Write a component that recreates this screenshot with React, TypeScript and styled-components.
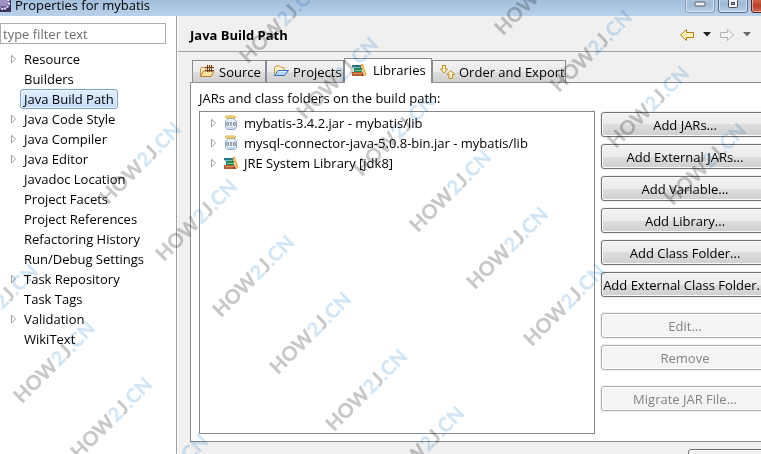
import React from 'react';
import styled, { createGlobalStyle, css } from 'styled-components';

const GlobalStyle = createGlobalStyle`
  * { box-sizing: border-box; }
  html, body { margin: 0; height: 100%; overflow: hidden; }
  #root { height: 100%; }
  body, button, input {
    font-family: "Open Sans", "Noto Sans", sans-serif;
    font-size: 13px;
    color: #000;
  }
`;

/* The dialog is wider than the viewport: its right edge runs out of view. */
const Dialog = styled.div`
  position: relative;
  display: flex;
  flex-direction: column;
  width: calc(100% + 24px);
  min-height: 100vh;
  background: #f0f0f0;
`;

const TitleBar = styled.header`
  display: flex;
  align-items: flex-end;
  height: 16px;
  overflow: hidden;
  background: linear-gradient(#a3bfdc, #b9d1ea);
`;

const TitleIcon = styled.svg`
  width: 16px;
  height: 16px;
  margin: 0 0 4px -5px;
`;

const TitleText = styled.h1`
  flex: 1;
  margin: 0;
  padding: 0 0 1px 4px;
  font-size: 13px;
  font-weight: 400;
  line-height: 20px;
`;

const WindowButtons = styled.div`
  display: flex;
  gap: 3px;
  padding: 0 4px 3px 0;
`;

const WindowButton = styled.button<{ $kind: 'plain' | 'strong' | 'close' }>`
  display: flex;
  align-items: center;
  justify-content: center;
  width: 30px;
  height: 18px;
  padding: 0;
  border: 1px solid ${(p) => (p.$kind === 'plain' ? '#879fba' : p.$kind === 'strong' ? '#586f8c' : '#5a2320')};
  border-radius: 0 0 3px 3px;
  box-shadow: inset 0 0 0 1px rgba(255, 255, 255, 0.5);
  background: ${(p) =>
    p.$kind === 'close'
      ? 'linear-gradient(#d87c66, #b9402a 60%, #d0674f)'
      : 'linear-gradient(#b5cce4, #9fbad6 50%, #b9cfe6)'};
`;

const Body = styled.div`
  flex: 1;
  display: flex;
`;

const Sidebar = styled.nav`
  flex: 0 0 178px;
  border-right: 1px solid #fafafa;
  box-shadow: inset -1px 0 #a0a0a0;
  background: #fff;
`;

const FilterInput = styled.input`
  display: block;
  width: 166px;
  height: 21px;
  margin: 7px 0 5px;
  padding: 0 2px;
  border: 1px solid #abadb3;
  border-radius: 0;
  background: #fff;
  outline: none;
  &::placeholder { color: #6d6d6d; opacity: 1; }
`;

const TreeList = styled.ul`
  margin: 0;
  padding: 0;
  list-style: none;
`;

const NavRow = styled.li`
  display: flex;
  align-items: center;
  height: 20px;
  padding-left: 10px;
`;

const ArrowSlot = styled.span`
  display: flex;
  flex: 0 0 10px;
`;

const NavItem = styled.button<{ $selected?: boolean }>`
  height: 20px;
  padding: 0 3px;
  border: 1px solid transparent;
  border-radius: 3px;
  background: none;
  line-height: 16px;
  white-space: nowrap;
  ${(p) =>
    p.$selected &&
    css`
      border-color: #7da2ce;
      background: linear-gradient(#e3effd, #c4dcfb);
      box-shadow: inset 0 0 0 1px #eef5fe;
    `}
`;

const Main = styled.main`
  flex: 1;
  display: flex;
  flex-direction: column;
  min-width: 0;
`;

const PageHeader = styled.div`
  display: flex;
  align-items: center;
  justify-content: space-between;
  height: 36px;
  padding: 2px 34px 0 12px;
  border-bottom: 1px solid #a0a0a0;
`;

const PageTitle = styled.h2`
  margin: 0;
  font-size: 13px;
  font-weight: 700;
  line-height: 20px;
`;

const History = styled.div`
  display: flex;
  align-items: center;
  gap: 8px;
`;

const IconButton = styled.button`
  display: flex;
  padding: 0;
  border: 0;
  background: none;
`;

const Folder = styled.section`
  flex: 1;
  display: flex;
  flex-direction: column;
  padding: 6px 8px 7px 12px;
`;

const TabStrip = styled.div`
  display: flex;
  align-items: flex-end;
  height: 24px;
  padding-left: 2px;
`;

const Tab = styled.button<{ $active?: boolean; $width: number }>`
  display: flex;
  align-items: center;
  gap: 4px;
  flex: 0 0 ${(p) => p.$width}px;
  height: 22px;
  padding: 0 0 0 6px;
  border: 1px solid #898c95;
  border-bottom: 0;
  background: linear-gradient(#f2f2f2, #ebebeb 50%, #dddddd 50%, #cfcfcf);
  white-space: nowrap;
  ${(p) =>
    p.$active &&
    css`
      z-index: 1;
      gap: 6px;
      height: 25px;
      margin-bottom: -1px;
      padding-bottom: 2px;
      background: #fff;
    `}
`;

const Panel = styled.div`
  flex: 1;
  display: flex;
  flex-direction: column;
  padding: 5px 7px 7px 8px;
  border: 1px solid #898c95;
  background: #fff;
`;

const PanelLabel = styled.p`
  margin: 0 0 3px;
  line-height: 20px;
`;

const PanelColumns = styled.div`
  flex: 1;
  display: flex;
  gap: 6px;
`;

const LibraryTree = styled.ul`
  flex: 1;
  min-width: 0;
  margin: 0;
  padding: 1px 0 0 10px;
  border: 1px solid #828790;
  list-style: none;
`;

const LibraryRow = styled.li`
  display: flex;
  align-items: center;
  height: 20px;
  white-space: nowrap;
`;

const LibraryIcon = styled.span`
  display: flex;
  margin: 0 5px 0 3px;
`;

const ActionColumn = styled.div`
  flex: 0 0 168px;
  display: flex;
  flex-direction: column;
  gap: 16px;
  padding-top: 1px;
`;

const ActionGroup = styled.div`
  display: flex;
  flex-direction: column;
  gap: 7px;
`;

const ActionButton = styled.button`
  height: 25px;
  padding: 0;
  border: 1px solid #707070;
  border-radius: 3px;
  background: linear-gradient(#f2f2f2, #ebebeb 50%, #dddddd 50%, #cfcfcf);
  box-shadow: inset 0 0 0 1px #fcfcfc, 0 0 0 1px #f0f0f0;
  line-height: 20px;
  white-space: nowrap;
  &:disabled {
    border-color: #adb2b5;
    background: #f4f4f4;
    color: #838383;
  }
`;

const Footer = styled.footer`
  display: flex;
  justify-content: flex-end;
  height: 5px;
  padding-right: 8px;
  overflow: hidden;
`;

const FooterButton = styled(ActionButton)`
  width: 89px;
`;

const WatermarkLayer = styled.div`
  position: absolute;
  inset: 0;
  z-index: 2;
  overflow: hidden;
  pointer-events: none;
  mix-blend-mode: multiply;
`;

const Watermark = styled.span<{ $x: number; $y: number }>`
  position: absolute;
  left: ${(p) => p.$x - 8}px;
  top: ${(p) => p.$y - 12}px;
  transform: rotate(-45deg);
  transform-origin: 8px 12px;
  color: #c8c8c8;
  font-family: Lato, sans-serif;
  font-size: 20px;
  font-weight: 900;
  line-height: 24px;
  white-space: nowrap;
`;

const Tint = styled.span`
  color: #d3e6f6;
`;

const Arrow = () => (
  <svg width="7" height="10" viewBox="0 0 7 10" aria-hidden="true">
    <path d="M1.5 1.2v7.6L5.5 5z" fill="#fff" stroke="#a0a0a0" />
  </svg>
);

const SourceIcon = () => (
  <svg width="16" height="16" viewBox="0 0 16 16" aria-hidden="true">
    <path d="M1.5 12V4.500l1-1h3l1 1.500h6V8" fill="#fff0c0" stroke="#c8924a" />
    <path d="M1.500 12.500 4.500 7h10.500l-3 5.500z" fill="#ffe3a0" stroke="#b87a2c" />
    <rect x="7" y="1" width="7" height="6" fill="#f3dcc0" />
    <path d="M6 3.500h9M6 6.500h9M8.500 1v7M10.500 1v7M12.500 1v7" stroke="#70402a" fill="none" />
  </svg>
);

const ProjectsIcon = () => (
  <svg width="16" height="16" viewBox="0 0 16 16" aria-hidden="true">
    <path d="M1.500 11V3.500L3 2h4l1.500 1.500h2.500v3.500" fill="#fff1bd" stroke="#c69a4a" />
    <path d="M1.500 11.500 5 6.500h10.500L11.500 11.500z" fill="#b4d6fa" stroke="#3a68b8" />
    <path d="M5.500 7.500h7.500" stroke="#e6f3ff" />
  </svg>
);

const BooksIcon = () => (
  <svg width="16" height="16" viewBox="0 0 16 16" aria-hidden="true">
    <path d="M1 3h9v3H3L1 5z" fill="#28788c" />
    <path d="M3 5.500h6" stroke="#7dc0c8" />
    <path d="M3 6h8v4H3z" fill="#1d8a55" />
    <path d="M4 8.500h7" stroke="#7cc89a" />
    <path d="M1 10h10v4H1z" fill="#b85c2c" />
    <path d="M2 11.500h9" stroke="#dc9460" />
    <path d="m9.500 2.500 2.300-.8L15.500 13l-2.200.8z" fill="#f0a030" />
    <path d="m10.800 3.500 3.200 9.500" stroke="#ffcf70" />
    <path d="m11 9.500 2 4.500h-2z" fill="#8a3a20" />
  </svg>
);

const OrderIcon = () => (
  <svg width="16" height="16" viewBox="0 0 16 16" aria-hidden="true" fill="#fff4c4" stroke="#bf8a1c">
    <path d="M3.500 1.500h3V5h2L5 9 1.500 5h2z" />
    <path d="M10 14.500v-4H8l3.700-4 3.800 4h-2v4z" />
  </svg>
);

const JarIcon = () => (
  <svg width="16" height="16" viewBox="0 0 16 16" aria-hidden="true">
    <path d="M4.500 3.500v1L2.500 6v7l2 1.500h7l2-1.500V6l-2-1.500v-1z" fill="#e4eefa" stroke="#93abca" />
    <path d="M4 13h8" stroke="#a9c6ea" />
    <rect x="2.500" y="1" width="10" height="2" rx="1" fill="#fbe69a" stroke="#d8ae40" />
    <g fill="none" stroke="#6a6d78">
      <rect x="3.700" y="7.500" width="1.800" height="3" rx=".8" />
      <path d="M8 7v4M7 7.500h1" />
      <rect x="10.500" y="7.500" width="1.800" height="3" rx=".8" />
    </g>
  </svg>
);

const HistoryArrow = ({ forward = false }: { forward?: boolean }) => (
  <svg width="16" height="14" viewBox="0 0 16 14" aria-hidden="true">
    {forward ? (
      <path d="M1.500 4.500h7v-3L14.500 7l-6 5.500v-3h-7z" fill="#f4f4f4" stroke="#b4b4b4" />
    ) : (
      <path d="M14.500 4.500h-7v-3L1.500 7l6 5.500v-3h7z" fill="#fff3b8" stroke="#b87d10" />
    )}
  </svg>
);

const Caret = ({ color }: { color: string }) => (
  <svg width="8" height="5" viewBox="0 0 8 5" aria-hidden="true">
    <path d="M0 0h8L4 4.500z" fill={color} />
  </svg>
);

const navItems = [
  { label: 'Resource', children: true },
  { label: 'Builders' },
  { label: 'Java Build Path', selected: true },
  { label: 'Java Code Style', children: true },
  { label: 'Java Compiler', children: true },
  { label: 'Java Editor', children: true },
  { label: 'Javadoc Location' },
  { label: 'Project Facets' },
  { label: 'Project References' },
  { label: 'Refactoring History' },
  { label: 'Run/Debug Settings' },
  { label: 'Task Repository', children: true },
  { label: 'Task Tags' },
  { label: 'Validation', children: true },
  { label: 'WikiText' },
];

const tabs = [
  { label: 'Source', icon: <SourceIcon />, width: 74 },
  { label: 'Projects', icon: <ProjectsIcon />, width: 78 },
  { label: 'Libraries', icon: <BooksIcon />, width: 88, active: true },
  { label: 'Order and Export', icon: <OrderIcon />, width: 133 },
];

const libraries = [
  { label: 'mybatis-3.4.2.jar - mybatis/lib', icon: <JarIcon /> },
  { label: 'mysql-connector-java-5.0.8-bin.jar - mybatis/lib', icon: <JarIcon /> },
  { label: 'JRE System Library [jdk8]', icon: <BooksIcon /> },
];

const actionGroups = [
  {
    disabled: false,
    labels: [
      'Add JARs...',
      'Add External JARs...',
      'Add Variable...',
      'Add Library...',
      'Add Class Folder...',
      'Add External Class Folder...',
    ],
  },
  { disabled: true, labels: ['Edit...', 'Remove'] },
  { disabled: true, labels: ['Migrate JAR File...'] },
];

const watermarks = [
  [108, 194], [164, 251], [221, 307], [278, 364], [334, 421], [391, 478],
  [248, 53], [305, 109], [362, 166], [418, 222], [475, 279], [532, 336],
  [503, 25], [559, 82], [616, 138], [673, 195],
  [-35, 336], [22, 393], [79, 449], [135, 506],
];

export default function App() {
  return (
    <>
      <GlobalStyle />
      <Dialog>
        <TitleBar>
          <TitleIcon viewBox="0 0 16 16" aria-hidden="true">
            <rect width="16" height="16" fill="#3c3260" />
            <circle cx="8" cy="7" r="6" fill="#6a5c9c" />
            <circle cx="8" cy="7" r="6" fill="none" stroke="#e8e6f2" strokeWidth="2" strokeDasharray="2 1" />
            <path d="M4 5h8M3 7h10M4 9h8" stroke="#cfc8e6" />
          </TitleIcon>
          <TitleText>Properties for mybatis</TitleText>
          <WindowButtons>
            <WindowButton $kind="plain" aria-label="Minimize">
              <svg width="12" height="6" viewBox="0 0 12 6">
                <rect x="1" y="1" width="10" height="4" rx="1" fill="#eee" stroke="#555b66" />
              </svg>
            </WindowButton>
            <WindowButton $kind="strong" aria-label="Maximize">
              <svg width="12" height="10" viewBox="0 0 12 10">
                <rect x="1.500" y=".5" width="9" height="8" rx="1" fill="#f4f4f4" stroke="#454b58" />
                <rect x="4.500" y="3.500" width="3" height="2" fill="#8fa9c8" stroke="#454b58" />
              </svg>
            </WindowButton>
            <WindowButton $kind="close" aria-label="Close" />
          </WindowButtons>
        </TitleBar>
        <Body>
          <Sidebar aria-label="Property pages">
            <FilterInput type="text" placeholder="type filter text" aria-label="Filter" />
            <TreeList>
              {navItems.map((item) => (
                <NavRow key={item.label}>
                  <ArrowSlot>{item.children && <Arrow />}</ArrowSlot>
                  <NavItem $selected={item.selected}>{item.label}</NavItem>
                </NavRow>
              ))}
            </TreeList>
          </Sidebar>
          <Main>
            <PageHeader>
              <PageTitle>Java Build Path</PageTitle>
              <History>
                <IconButton aria-label="Back"><HistoryArrow /></IconButton>
                <IconButton aria-label="Back history"><Caret color="#202020" /></IconButton>
                <IconButton aria-label="Forward"><HistoryArrow forward /></IconButton>
                <IconButton aria-label="Forward history"><Caret color="#6c6c6c" /></IconButton>
              </History>
            </PageHeader>
            <Folder>
              <TabStrip role="tablist">
                {tabs.map((tab) => (
                  <Tab key={tab.label} role="tab" aria-selected={!!tab.active} $active={tab.active} $width={tab.width}>
                    {tab.icon}
                    {tab.label}
                  </Tab>
                ))}
              </TabStrip>
              <Panel role="tabpanel">
                <PanelLabel id="libraries-label">JARs and class folders on the build path:</PanelLabel>
                <PanelColumns>
                  <LibraryTree aria-labelledby="libraries-label">
                    {libraries.map((lib) => (
                      <LibraryRow key={lib.label}>
                        <ArrowSlot><Arrow /></ArrowSlot>
                        <LibraryIcon>{lib.icon}</LibraryIcon>
                        {lib.label}
                      </LibraryRow>
                    ))}
                  </LibraryTree>
                  <ActionColumn>
                    {actionGroups.map((group) => (
                      <ActionGroup key={group.labels[0]}>
                        {group.labels.map((label) => (
                          <ActionButton key={label} disabled={group.disabled}>{label}</ActionButton>
                        ))}
                      </ActionGroup>
                    ))}
                  </ActionColumn>
                </PanelColumns>
              </Panel>
            </Folder>
            <Footer>
              <FooterButton aria-label="Apply" />
            </Footer>
          </Main>
        </Body>
        <WatermarkLayer aria-hidden="true">
          {watermarks.map(([x, y]) => (
            <Watermark key={`${x},${y}`} $x={x} $y={y}>
              HOW<Tint>2</Tint>J<Tint>.CN</Tint>
            </Watermark>
          ))}
        </WatermarkLayer>
      </Dialog>
    </>
  );
}
